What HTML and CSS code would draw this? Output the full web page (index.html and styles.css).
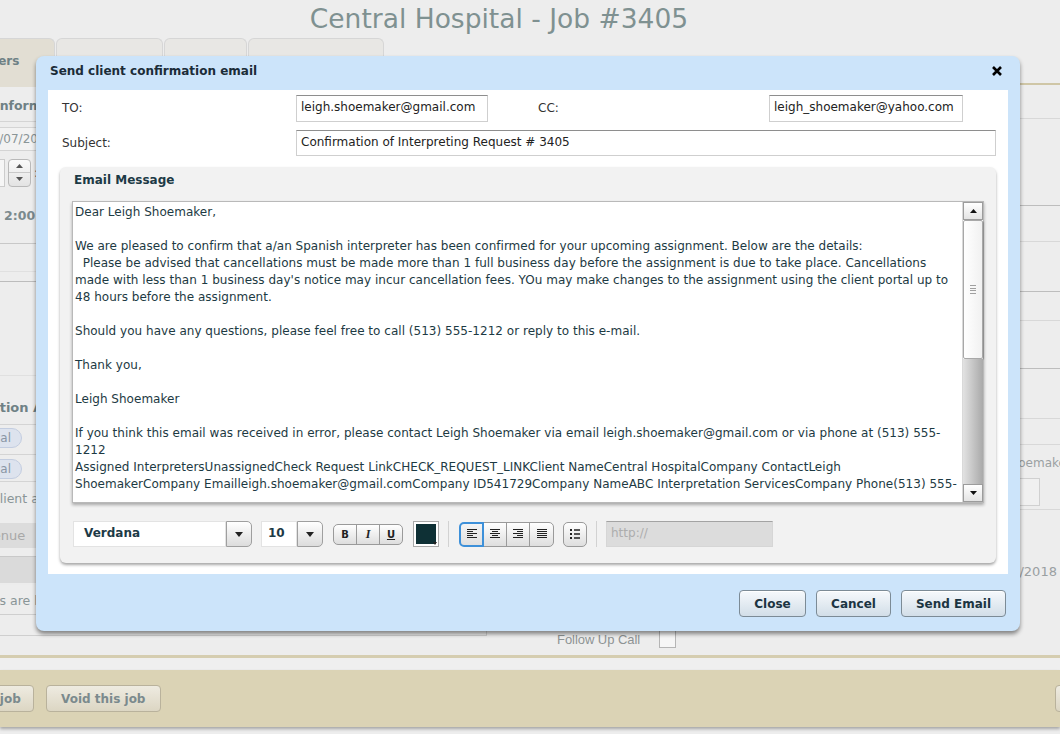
FILE: index.html
```html
<!DOCTYPE html>
<html lang="en">
<head>
    <meta charset="utf-8">
    <title>Central Hospital - Job #3405</title>
    <link rel="stylesheet" href="styles.css">
</head>
<body>
    <div class="page">
        <h1 class="page-title">Central Hospital - Job #3405</h1>
        <div class="tabs">
            <div class="tab active"><span class="tab-text">Interpreters</span></div>
            <div class="tab t2"></div>
            <div class="tab t3"></div>
            <div class="tab t4"></div>
        </div>

        <div class="job">
            <div class="job-left">
                <div class="row r-head"><span class="h-info">Information</span></div>
                <div class="row r-date"><div class="date-box"><span>06/07/2018</span></div></div>
                <div class="row r-spin">
                    <div class="spin-box"></div>
                    <div class="spinner">
                        <span><svg width="7" height="4" viewBox="0 0 7 4"><path d="M0 4H7L3.5 0Z" fill="#555"/></svg></span>
                        <span><svg width="7" height="4" viewBox="0 0 7 4"><path d="M0 0H7L3.5 4Z" fill="#555"/></svg></span>
                    </div>
                    <span class="colon">:</span>
                </div>
                <div class="row r-time"><span class="time">2:00</span></div>
                <div class="row r-a"></div>
                <div class="row r-b"></div>
                <div class="row r-c"></div>
                <div class="row r-head2"><span class="loc">Location Address</span></div>
                <div class="row r-pill"><span class="pill">Medical</span></div>
                <div class="row r-pill2"><span class="pill">Medical</span></div>
                <div class="row r-client"><span class="client">Client address</span></div>
                <div class="row r-ave"><div class="ave">Avenue</div></div>
                <div class="row r-bar"></div>
                <div class="row r-note">
                    <span class="note">Times are here</span>
                    <div class="note-box"></div>
                </div>
            </div>

            <div class="job-right">
                <div class="rr h33"></div>
                <div class="rr h86 dark"></div>
                <div class="rr h35"></div>
                <div class="rr h49 dark"></div>
                <div class="rr h28"></div>
                <div class="rr h47 dark"></div>
                <div class="rr h49"></div>
                <div class="rr h25"></div>
                <div class="rr r-contact">
                    <span class="contact">Shoemaker</span>
                    <div class="contact-box"></div>
                </div>
                <div class="rr r-when"><span class="when">06/07/2018</span></div>
                <div class="r-follow">
                    <span class="follow">Follow Up Call</span>
                    <span class="check"></span>
                </div>
            </div>
        </div>

        <div class="foot-line"></div>
        <div class="foot-bar">
            <button class="foot-btn first">Edit job</button>
            <button class="foot-btn">Void this job</button>
            <button class="foot-btn last">Save</button>
        </div>
    </div>

    <div class="modal">
        <div class="modal-head">
            <span class="modal-title">Send client confirmation email</span>
            <span class="modal-close">
                <svg width="12" height="12" viewBox="0 0 12 12"><path d="M2 2L10 10M10 2L2 10" stroke="#000" stroke-width="2.6"/></svg>
            </span>
        </div>

        <div class="modal-body">
            <div class="form-row">
                <label class="lbl">TO:</label>
                <div class="field to">leigh.shoemaker@gmail.com</div>
                <label class="lbl cc-lbl">CC:</label>
                <div class="field cc">leigh_shoemaker@yahoo.com</div>
            </div>
            <div class="form-row subj-row">
                <label class="lbl">Subject:</label>
                <div class="field subject">Confirmation of Interpreting Request # 3405</div>
            </div>

            <div class="msg-panel">
                <div class="msg-title">Email Message</div>
                <div class="editor">
                    <div class="editor-text">
                        Dear Leigh Shoemaker,<br>
                        <br>
                        We are pleased to confirm that a/an Spanish interpreter has been confirmed for your upcoming assignment. Below are the details:<br>
                        &nbsp;&nbsp;Please be advised that cancellations must be made more than 1 full business day before the assignment is due to take place. Cancellations<br>
                        made with less than 1 business day's notice may incur cancellation fees. YOu may make changes to the assignment using the client portal up to<br>
                        48 hours before the assignment.<br>
                        <br>
                        Should you have any questions, please feel free to call (513) 555-1212 or reply to this e-mail.<br>
                        <br>
                        Thank you,<br>
                        <br>
                        Leigh Shoemaker<br>
                        <br>
                        If you think this email was received in error, please contact Leigh Shoemaker via email leigh.shoemaker@gmail.com or via phone at (513) 555-<br>
                        1212<br>
                        Assigned InterpretersUnassignedCheck Request LinkCHECK_REQUEST_LINKClient NameCentral HospitalCompany ContactLeigh<br>
                        ShoemakerCompany Emailleigh.shoemaker@gmail.comCompany ID541729Company NameABC Interpretation ServicesCompany Phone(513) 555-
                    </div>
                    <div class="scrollbar">
                        <div class="sb-btn"><svg width="7" height="4" viewBox="0 0 7 4"><path d="M0 4H7L3.5 0Z" fill="#111"/></svg></div>
                        <div class="sb-thumb"><span class="grip"></span></div>
                        <div class="sb-track"></div>
                        <div class="sb-btn"><svg width="7" height="4" viewBox="0 0 7 4"><path d="M0 0H7L3.5 4Z" fill="#111"/></svg></div>
                    </div>
                </div>

                <div class="toolbar">
                    <div class="combo font">
                        <div class="combo-field">Verdana</div>
                        <div class="combo-btn"><svg width="8" height="5" viewBox="0 0 8 5"><path d="M0 0H8L4 5Z" fill="#222"/></svg></div>
                    </div>
                    <div class="combo size">
                        <div class="combo-field">10</div>
                        <div class="combo-btn"><svg width="8" height="5" viewBox="0 0 8 5"><path d="M0 0H8L4 5Z" fill="#222"/></svg></div>
                    </div>
                    <div class="group biu">
                        <span class="tb-btn b">B</span>
                        <span class="tb-btn i">I</span>
                        <span class="tb-btn u">U</span>
                    </div>
                    <div class="swatch"><span class="swatch-fill"></span><span class="swatch-arrow"></span></div>
                    <span class="sep"></span>
                    <div class="group align">
                        <span class="tb-btn on"><svg width="10" height="10" viewBox="0 0 10 10"><path d="M0 .5H10M0 2.5H6M0 4.5H10M0 6.5H6M0 8.5H10" stroke="#222"/></svg></span>
                        <span class="tb-btn"><svg width="10" height="10" viewBox="0 0 10 10"><path d="M0 .5H10M2 2.5H8M0 4.5H10M2 6.5H8M0 8.5H10" stroke="#222"/></svg></span>
                        <span class="tb-btn"><svg width="10" height="10" viewBox="0 0 10 10"><path d="M0 .5H10M4 2.5H10M0 4.5H10M4 6.5H10M0 8.5H10" stroke="#222"/></svg></span>
                        <span class="tb-btn"><svg width="10" height="10" viewBox="0 0 10 10"><path d="M0 .5H10M0 2.5H10M0 4.5H10M0 6.5H10M0 8.5H10" stroke="#222"/></svg></span>
                    </div>
                    <span class="tb-btn single"><svg width="10" height="10" viewBox="0 0 10 10"><path d="M0 0h2v2H0zM0 4h2v2H0zM0 8h2v2H0z" fill="#222"/><path d="M4 1H10M4 5H10M4 9H10" stroke="#222" stroke-width="1.4"/></svg></span>
                    <span class="sep"></span>
                    <div class="url">http://</div>
                </div>
            </div>
        </div>

        <div class="modal-foot">
            <button class="btn close">Close</button>
            <button class="btn cancel">Cancel</button>
            <button class="btn send">Send Email</button>
        </div>
    </div>
</body>
</html>
```

FILE: styles.css
```css
body {
    margin: 0;
    width: 1060px;
    height: 734px;
    overflow: hidden;
    background-color: #ededed;
    font-family: "DejaVu Sans", Verdana, sans-serif;
    font-size: 12px;
    color: #333;
    position: relative;
}

/* ---------- page behind the dialog ---------- */

.page-title {
    margin: 0;
    height: 38px;
    line-height: 38px;
    padding-right: 62px;
    text-align: center;
    font-size: 26.5px;
    font-weight: normal;
    color: #7f9191;
}

.tabs {
    display: flex;
    height: 47px;
}

.tab {
    box-sizing: border-box;
    height: 47px;
    margin-right: 1px;
    border: 1px solid #d6d6d6;
    border-bottom: none;
    border-radius: 6px 6px 0 0;
    background-color: #e8e7e4;
    color: #8a9a9d;
    font-weight: bold;
    font-size: 12px;
    padding-top: 15px;
    overflow: hidden;
    white-space: nowrap;
}

.tab.active {
    width: 55px;
    border-left: none;
    border-radius: 0 6px 0 0;
    background-color: #e2ded3;
    color: #6f8185;
}

.tab-text {
    margin-left: -63px;
}

.t2 { width: 107px; }
.t3 { width: 83px; }
.t4 { width: 136px; }

.job {
    display: grid;
    grid-template-columns: 488px 1fr;
    height: 570px;
}

.job-left {
    border-top: 2px solid #e2ded3;
    font-size: 12px;
    color: #8a9597;
    white-space: nowrap;
}

.row {
    box-sizing: border-box;
    border-bottom: 1px solid #d4d4d4;
}

.r-head { height: 35px; padding-top: 11px; }
.h-info { margin-left: -5px; font-weight: bold; font-size: 12.5px; color: #6f8185; }

.r-date { height: 33px; padding-top: 5px; border-bottom: none; }
.date-box {
    width: 60px;
    height: 22px;
    margin-left: -23px;
    border: 1px solid #d4d4d4;
    background-color: #f2f2f2;
    line-height: 22px;
    padding-left: 6px;
}

.r-spin { height: 35px; display: flex; align-items: center; border-bottom: none; }
.spin-box { width: 4px; height: 26px; border: 1px solid #ccc; border-left: none; background: #f6f6f6; }
.spinner {
    margin-left: 3px;
    width: 21px;
    height: 26px;
    border: 1px solid #b9b9b9;
    border-radius: 4px;
    background: linear-gradient(#fafafa, #e3e3e3);
    display: flex;
    flex-direction: column;
}
.spinner span { flex: 1; display: flex; align-items: center; justify-content: center; }
.spinner span + span { border-top: 1px solid #c9c9c9; }
.colon { margin-left: 3px; color: #666; }

.r-time { height: 54px; padding: 18px 0 0 4px; border-bottom-color: #c8c8c8; }
.time { font-weight: bold; font-size: 12.5px; color: #7b8a8d; }

.r-a { height: 28px; border-bottom-color: #e0e0e0; }
.r-b { height: 10px; border-bottom-color: #bcbcbc; }
.r-c { height: 94px; border-bottom-color: #e0e0e0; }

.r-head2 { height: 49px; padding-top: 24px; }
.loc { margin-left: -34px; font-weight: bold; font-size: 13px; color: #6f8185; }

.r-pill { height: 30px; padding-top: 3px; }
.r-pill2 { height: 27px; padding-top: 4px; }
.pill {
    display: inline-block;
    margin-left: -44px;
    padding: 0 10px 0 8px;
    height: 18px;
    line-height: 18px;
    border: 1px solid #c3cde0;
    border-radius: 10px;
    background-color: #dde3ee;
    color: #8a96a5;
}

.r-client { height: 40px; padding-top: 9px; border-bottom: none; }
.client { margin-left: -9px; font-size: 12.5px; color: #8a9597; }

.r-ave { height: 35px; padding-top: 1px; border-bottom-color: #c9c9c9; }
.ave {
    width: 140px;
    height: 25px;
    margin-left: -27px;
    padding-left: 4px;
    line-height: 25px;
    background-color: #dcdcdc;
    color: #a8a8a8;
    font-size: 13px;
}

.r-bar { height: 28px; background-color: #dadada; border-bottom: 2px solid #ececec; }

.r-note { height: 70px; border-bottom: none; padding-top: 8px; }
.note { margin-left: -31px; font-size: 12.5px; color: #8a9597; }
.note-box {
    margin-top: 6px;
    height: 22px;
    width: 487px;
    border: 1px solid #cfcfcf;
    border-left: none;
    box-sizing: border-box;
}

.job-right {
    border-top: 2px solid #cfc6a6;
    margin-top: -2px;
    white-space: nowrap;
}

.rr { box-sizing: border-box; border-bottom: 1px solid #d8d8d8; }
.rr.dark { border-bottom-color: #bdbdbd; }
.h33 { height: 34px; }
.h86 { height: 87px; }
.h35 { height: 36px; }
.h49 { height: 50px; }
.h28 { height: 29px; }
.h47 { height: 48px; }
.h25 { height: 26px; }

.r-contact { height: 65px; padding-top: 11px; padding-left: 515px; }
.contact { color: #9aa0a2; font-size: 12px; }
.contact-box {
    margin-top: 8px;
    margin-left: -100px;
    width: 137px;
    height: 28px;
    box-sizing: border-box;
    border: 1px solid #d0d0d0;
    background-color: #f0f0f0;
}

.r-when { height: 115px; padding-top: 54px; padding-left: 494px; border-bottom: none; }
.when { color: #9aa0a2; font-size: 13px; }

.r-follow { display: flex; align-items: center; height: 28px; padding-left: 69px; }
.follow {
    font-family: "Liberation Sans", Arial, sans-serif;
    font-size: 13px;
    letter-spacing: -0.05px;
    color: #8d9394;
}
.check {
    margin-left: 19px;
    width: 15px;
    height: 16px;
    border: 1px solid #b5b5b5;
    background: #f6f6f6;
}

.foot-line {
    height: 12px;
    border-top: 3px solid #d5cdb0;
    background-color: #efefef;
}

.foot-bar {
    height: 57px;
    background-color: #dbd3b5;
    box-shadow: 0 2px 3px rgba(0, 0, 0, 0.3);
    display: flex;
    align-items: center;
}

.foot-btn {
    height: 27px;
    margin-right: 12px;
    padding: 0 14px;
    border: 1px solid #b9b29c;
    border-radius: 4px;
    background: linear-gradient(#eeebe1, #dcd6c3);
    color: #7b8a8d;
    font-family: "DejaVu Sans", Verdana, sans-serif;
    font-weight: bold;
    font-size: 12px;
}

.foot-btn.first { margin-left: -46px; padding: 0 12px 0 14px; }
.foot-btn:nth-child(2) { width: 115px; padding: 0; }
.foot-btn.last { margin-left: auto; margin-right: -58px; }

/* ---------- dialog ---------- */

.modal {
    position: absolute;
    left: 36px;
    top: 56px;
    width: 984px;
    height: 575px;
    background-color: #cce4fa;
    border-radius: 8px;
    box-shadow: 0 3px 4px rgba(0, 0, 0, 0.45);
    display: flex;
    flex-direction: column;
}

.modal-head {
    height: 34px;
    box-sizing: border-box;
    display: flex;
    justify-content: space-between;
    padding: 7px 17px 0 14px;
}

.modal-title {
    line-height: 16px;
    font-weight: bold;
    font-size: 12px;
    color: #1b2c38;
}

.modal-close { padding-top: 2px; }

.modal-body {
    margin: 0 12px;
    height: 484px;
    box-sizing: border-box;
    padding: 5px 12px 11px 12px;
    background-color: #fff;
}

.form-row {
    display: flex;
    height: 27px;
    margin-bottom: 8px;
}

.subj-row {
    height: 26px;
    margin-bottom: 11px;
}

.lbl {
    width: 236px;
    box-sizing: border-box;
    padding: 6px 0 0 2px;
    font-size: 12px;
    color: #333;
}

.cc-lbl {
    width: 233px;
    margin-left: 48px;
}

.field {
    box-sizing: border-box;
    padding: 4px 0 0 4px;
    border: 1px solid #cfcfcf;
    border-top-color: #8e8e8e;
    font-size: 12px;
    color: #222;
    white-space: nowrap;
    overflow: hidden;
}

.to { width: 192px; }
.cc { width: 194px; }
.subject { width: 700px; padding-top: 4px; }

.msg-panel {
    height: 396px;
    box-sizing: border-box;
    padding: 0 12px;
    background-color: #f2f2f2;
    border-radius: 6px;
    box-shadow: 0 2px 3px rgba(0, 0, 0, 0.35);
}

.msg-title {
    height: 34px;
    box-sizing: border-box;
    padding: 6px 0 0 2px;
    font-weight: bold;
    font-size: 12px;
    color: #1d3a46;
}

.editor {
    display: flex;
    height: 302px;
    box-sizing: border-box;
    border: 1px solid #b9b9b9;
    background-color: #fff;
    box-shadow: 0 2px 3px rgba(0, 0, 0, 0.3);
}

.editor-text {
    flex: 1;
    padding: 2px 0 0 2px;
    line-height: 17px;
    font-size: 12px;
    letter-spacing: 0.02px;
    color: #1d3a43;
    white-space: nowrap;
    overflow: hidden;
}

.scrollbar {
    width: 20px;
    display: flex;
    flex-direction: column;
    border-left: 1px solid #d9d9d9;
}

.sb-btn {
    height: 18px;
    box-sizing: border-box;
    display: flex;
    align-items: center;
    justify-content: center;
    border: 1px solid #9c9c9c;
    background: linear-gradient(#ffffff, #e4e4e4);
}

.sb-thumb {
    height: 139px;
    box-sizing: border-box;
    border: 1px solid #a8a8a8;
    border-radius: 2px;
    background: linear-gradient(to right, #ffffff, #f1f1f1);
    box-shadow: 1px 1px 1px rgba(0, 0, 0, 0.25);
    display: flex;
    align-items: center;
    justify-content: center;
}

.grip {
    width: 6px;
    height: 7px;
    border-top: 1px solid #a0a0a0;
    border-bottom: 1px solid #a0a0a0;
    background: linear-gradient(transparent 2px, #a0a0a0 2px, #a0a0a0 3px, transparent 3px, transparent 4px, #a0a0a0 4px, #a0a0a0 5px, transparent 5px);
}

.sb-track {
    flex: 1;
    background: linear-gradient(to right, #e2e2e2, #a9a9a9);
}

.toolbar {
    display: flex;
    align-items: center;
    height: 26px;
    margin-top: 18px;
    padding-left: 1px;
}

.combo {
    display: flex;
    height: 26px;
}

.combo-field {
    box-sizing: border-box;
    border: 1px solid #e3e3e3;
    background-color: #fff;
    font-weight: bold;
    font-size: 12px;
    color: #1d3a46;
    padding-top: 4px;
}

.font .combo-field { width: 153px; padding-left: 10px; }
.size { margin-left: 9px; }
.size .combo-field { width: 36px; padding-left: 6px; }

.combo-btn {
    width: 26px;
    box-sizing: border-box;
    display: flex;
    align-items: center;
    justify-content: center;
    border: 1px solid #9f9f9f;
    border-radius: 0 5px 5px 0;
    background: linear-gradient(#ffffff, #dcdcdc);
}

.group {
    display: flex;
}

.tb-btn {
    box-sizing: border-box;
    display: flex;
    align-items: center;
    justify-content: center;
    border: 1px solid #9a9a9a;
    background: linear-gradient(#ffffff, #dedede);
    color: #222;
}

.biu { margin-left: 10px; }
.biu .tb-btn {
    width: 24px;
    height: 21px;
    font-family: "DejaVu Sans", sans-serif;
    font-weight: bold;
    font-size: 10px;
}
.biu .tb-btn + .tb-btn { margin-left: -1px; }
.biu .b { border-radius: 5px 0 0 5px; }
.biu .i { font-style: italic; font-family: "Liberation Serif", serif; font-size: 12px; }
.biu .u { border-radius: 0 5px 5px 0; text-decoration: underline; }

.swatch {
    position: relative;
    margin-left: 10px;
    width: 26px;
    height: 26px;
    box-sizing: border-box;
    border: 1px solid #a9a9a9;
    background: #fff;
    padding: 2px;
}
.swatch-fill { display: block; width: 20px; height: 20px; background-color: #0e3035; }
.swatch-arrow {
    position: absolute;
    right: 1px;
    bottom: 1px;
    width: 0;
    height: 0;
    border-left: 2.5px solid transparent;
    border-right: 2.5px solid transparent;
    border-top: 3px solid #222;
}

.sep {
    width: 1px;
    height: 26px;
    margin: 0 10px 0 9px;
    background-color: #d2d2d2;
}

.align .tb-btn {
    width: 24px;
    height: 25px;
}
.align .tb-btn + .tb-btn { margin-left: -1px; }
.align .tb-btn:first-child { width: 25px; border-radius: 5px 0 0 5px; }
.align .tb-btn:last-child { width: 25px; border-radius: 0 5px 5px 0; }
.align .tb-btn.on {
    border: 2px solid #3d90d9;
    background: linear-gradient(#f4f4f4, #e0e0e0);
    position: relative;
    z-index: 1;
}

.tb-btn.single {
    margin-left: 9px;
    width: 24px;
    height: 25px;
    border-radius: 5px;
}

.url {
    width: 167px;
    height: 26px;
    box-sizing: border-box;
    border: 1px solid #d6d6d6;
    border-top-color: #a3a3a3;
    background-color: #dcdcdc;
    color: #adadad;
    font-size: 12px;
    padding: 4px 0 0 4px;
}

.url:last-child { margin-left: -1px; }

.modal-foot {
    flex: 1;
    display: flex;
    justify-content: flex-end;
    align-items: flex-start;
    gap: 10px;
    padding: 16px 14px 0 0;
}

.btn {
    height: 27px;
    border: 1px solid #7c8b96;
    border-radius: 4px;
    background: linear-gradient(#f6f9fc, #d2dee8);
    box-shadow: inset 0 1px 0 #fff;
    color: #1c3542;
    font-family: "DejaVu Sans", Verdana, sans-serif;
    font-weight: bold;
    font-size: 12px;
    padding: 0;
}

.close { width: 67px; }
.cancel { width: 75px; }
.send { width: 105px; }
```
